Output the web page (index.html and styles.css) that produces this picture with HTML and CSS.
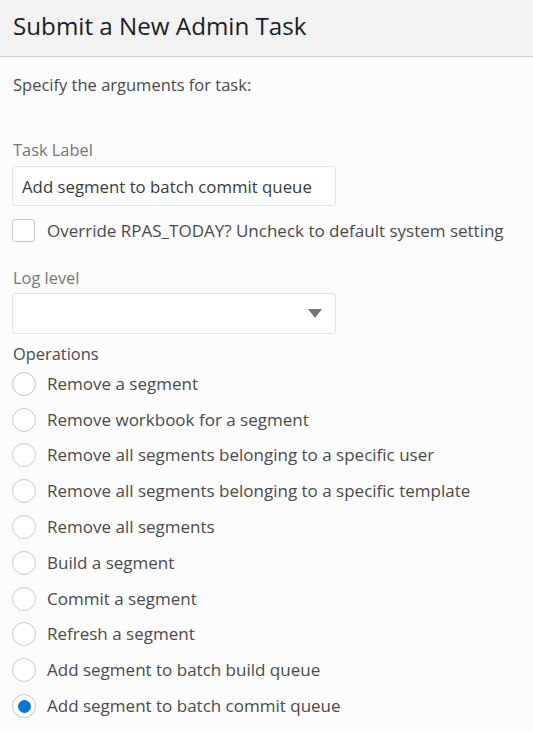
FILE: index.html
```html
<!DOCTYPE html>
<html lang="en">
<head>
<meta charset="utf-8">
<title>Submit a New Admin Task</title>
<link rel="stylesheet" href="styles.css">
</head>
<body>
<header class="header"><h1 class="title">Submit a New Admin Task</h1></header>
<main class="content">
  <p class="intro">Specify the arguments for task:</p>
  <label class="field-label">Task Label</label>
  <div class="text-input">Add segment to batch commit queue</div>
  <div class="check-row"><span class="checkbox"></span><span class="opt-text">Override RPAS_TODAY? Uncheck to default system setting</span></div>
  <label class="field-label log-label">Log level</label>
  <div class="select"><span class="caret"></span></div>
  <div class="group-label">Operations</div>
  <ul class="radios">
    <li class="radio-row"><span class="radio"></span><span class="opt-text">Remove a segment</span></li>
    <li class="radio-row"><span class="radio"></span><span class="opt-text">Remove workbook for a segment</span></li>
    <li class="radio-row"><span class="radio"></span><span class="opt-text">Remove all segments belonging to a specific user</span></li>
    <li class="radio-row"><span class="radio"></span><span class="opt-text">Remove all segments belonging to a specific template</span></li>
    <li class="radio-row"><span class="radio"></span><span class="opt-text">Remove all segments</span></li>
    <li class="radio-row"><span class="radio"></span><span class="opt-text">Build a segment</span></li>
    <li class="radio-row"><span class="radio"></span><span class="opt-text">Commit a segment</span></li>
    <li class="radio-row"><span class="radio"></span><span class="opt-text">Refresh a segment</span></li>
    <li class="radio-row"><span class="radio"></span><span class="opt-text">Add segment to batch build queue</span></li>
    <li class="radio-row"><span class="radio checked"></span><span class="opt-text">Add segment to batch commit queue</span></li>
  </ul>
</main>
</body>
</html>
```
FILE: styles.css
```css
html, body {
  margin: 0;
  padding: 0;
  background: #fcfcfc;
  font-family: "Open Sans", "Noto Sans", sans-serif;
  color: #4a4a4a;
}
.header {
  height: 56px;
  background: #f2f2f2;
  border-bottom: 1px solid #d0d0d0;
  display: flex;
  align-items: center;
  padding: 0 13px;
}
.title {
  margin: 0;
  font-size: 24.2px;
  font-weight: 400;
  color: #1c1c24;
  line-height: 30px;
  padding-bottom: 4px;
}
.content {
  padding: 0 12px;
}
.intro {
  margin: 16px 0 0 1px;
  font-size: 16.5px;
  line-height: 24px;
  color: #4a4a4a;
}
.field-label {
  display: block;
  margin-top: 42px;
  padding-left: 1px;
  font-size: 16.4px;
  line-height: 22px;
  color: #767676;
}
.text-input {
  margin-top: 5px;
  box-sizing: border-box;
  width: 324px;
  height: 40px;
  border: 1px solid #e2e2e2;
  border-radius: 3px;
  background: #fff;
  padding: 0 9px;
  display: flex;
  align-items: center;
  font-size: 16.8px;
  color: #3a3a3a;
}
.check-row {
  margin-top: 12px;
  display: flex;
  align-items: center;
  height: 24px;
}
.checkbox {
  box-sizing: border-box;
  width: 23px;
  height: 23px;
  border: 1px solid #c6c6c6;
  border-radius: 3px;
  background: #fff;
  flex: none;
}
.opt-text {
  margin-left: 12px;
  font-size: 17px;
  line-height: 22px;
  color: #4a4a4a;
  white-space: nowrap;
}
.check-row .opt-text {
  margin-left: 12px;
  padding-top: 2px;
}
.log-label {
  margin-top: 25px;
}
.select {
  margin-top: 4px;
  box-sizing: border-box;
  width: 324px;
  height: 41px;
  border: 1px solid #e2e2e2;
  border-radius: 3px;
  background: #fff;
  display: flex;
  align-items: center;
  justify-content: flex-end;
  padding-right: 13px;
}
.caret {
  width: 0;
  height: 0;
  border-left: 7.5px solid transparent;
  border-right: 7.5px solid transparent;
  border-top: 9px solid #777;
}
.group-label {
  margin-top: 9px;
  padding-left: 1px;
  font-size: 16.4px;
  line-height: 22px;
  color: #4a4a4a;
}
.radios {
  list-style: none;
  margin: 1px 0 0;
  padding: 0;
}
.radio-row {
  height: 35.8px;
  display: flex;
  align-items: center;
}
.radio-row .opt-text {
  margin-left: 11px;
}
.radio {
  box-sizing: border-box;
  width: 24px;
  height: 24px;
  border: 1px solid #c9c9c9;
  border-radius: 50%;
  background: #fff;
  flex: none;
  display: flex;
  align-items: center;
  justify-content: center;
}
.radio.checked::after {
  content: "";
  width: 13px;
  height: 13px;
  border-radius: 50%;
  background: #0a76d0;
}
```
